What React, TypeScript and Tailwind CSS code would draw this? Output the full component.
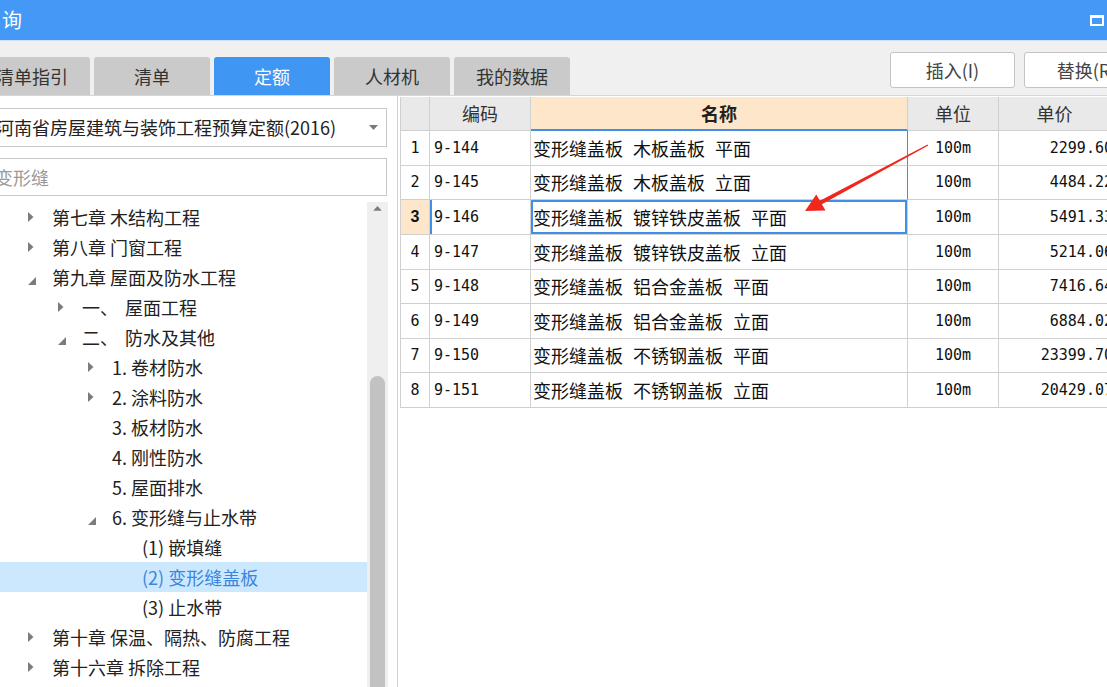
import React from 'react'

type Node = { level: number; arrow?: 'c' | 'e'; text: string; selected?: boolean }

const tree: Node[] = [
  { level: 0, arrow: 'c', text: '第七章 木结构工程' },
  { level: 0, arrow: 'c', text: '第八章 门窗工程' },
  { level: 0, arrow: 'e', text: '第九章 屋面及防水工程' },
  { level: 1, arrow: 'c', text: '一、 屋面工程' },
  { level: 1, arrow: 'e', text: '二、 防水及其他' },
  { level: 2, arrow: 'c', text: '1. 卷材防水' },
  { level: 2, arrow: 'c', text: '2. 涂料防水' },
  { level: 2, text: '3. 板材防水' },
  { level: 2, text: '4. 刚性防水' },
  { level: 2, text: '5. 屋面排水' },
  { level: 2, arrow: 'e', text: '6. 变形缝与止水带' },
  { level: 3, text: '(1) 嵌填缝' },
  { level: 3, text: '(2) 变形缝盖板', selected: true },
  { level: 3, text: '(3) 止水带' },
  { level: 0, arrow: 'c', text: '第十章 保温、隔热、防腐工程' },
  { level: 0, arrow: 'c', text: '第十六章 拆除工程' },
]

const indent = ['pl-[28px]', 'pl-[58px] [word-spacing:3px]', 'pl-[88px]', 'pl-[118px]']

const rows = [
  { code: '9-144', name: '变形缝盖板 木板盖板 平面', price: '2299.60', h: 'h-[35px]' },
  { code: '9-145', name: '变形缝盖板 木板盖板 立面', price: '4484.22', h: 'h-[34px]' },
  { code: '9-146', name: '变形缝盖板 镀锌铁皮盖板 平面', price: '5491.33', h: 'h-[35px]' },
  { code: '9-147', name: '变形缝盖板 镀锌铁皮盖板 立面', price: '5214.06', h: 'h-[35px]' },
  { code: '9-148', name: '变形缝盖板 铝合金盖板 平面', price: '7416.64', h: 'h-[34px]' },
  { code: '9-149', name: '变形缝盖板 铝合金盖板 立面', price: '6884.02', h: 'h-[35px]' },
  { code: '9-150', name: '变形缝盖板 不锈钢盖板 平面', price: '23399.70', h: 'h-[34px]' },
  { code: '9-151', name: '变形缝盖板 不锈钢盖板 立面', price: '20429.07', h: 'h-[35px]' },
]

const mono = "font-['DejaVu_Sans_Mono',monospace] text-[15px]"

function Arrow({ kind }: { kind?: 'c' | 'e' }) {
  if (kind === 'c')
    return (
      <svg width="6" height="10" viewBox="0 0 6 10">
        <path d="M0 0L5.5 5L0 10Z" fill="#7c7c7c" />
      </svg>
    )
  if (kind === 'e')
    return (
      <svg width="8" height="8" viewBox="0 0 8 8" className="mt-[7px]">
        <path d="M8 0V8H0Z" fill="#7c7c7c" />
      </svg>
    )
  return null
}

const tabs = ['清单指引', '清单', '定额', '人材机', '我的数据']

export default function App() {
  return (
    <div className="relative h-[687px] w-[1107px] overflow-hidden bg-[#f0f0f0] font-['Noto_Sans_CJK_SC',sans-serif] text-[#333]">
      {/* title bar */}
      <div className="flex h-[40px] items-center justify-between bg-[#4498f6] pl-[2px] pr-[3px] text-white">
        <span className="text-[20px]">询</span>
        <div className="h-[11px] w-[14px] border-2 border-t-[3px] border-white" />
      </div>
      <div className="h-px bg-[#cfe2f8]" />

      {/* tabs row */}
      <div className="flex h-[55px] items-start justify-between border-b border-[#d6d6d6]">
        <div className="-ml-[26px] mt-[16px] flex shrink-0 gap-[4px]">
          {tabs.map((t) => (
            <div
              key={t}
              className={
                t === '定额'
                  ? 'flex h-[38px] w-[116px] items-center justify-center rounded-t-[3px] bg-[#4096f3] text-[18px] text-white'
                  : 'flex h-[38px] w-[116px] items-center justify-center rounded-t-[3px] bg-[#cacaca] text-[18px] text-[#333]'
              }
            >
              {t}
            </div>
          ))}
        </div>
        <div className="-mr-[42px] mt-[11px] flex shrink-0 gap-[9px]">
          <button className="flex h-[36px] w-[125px] items-center justify-center rounded-[3px] border border-[#c4c4c4] bg-white text-[18px] text-[#444]">
            插入(I)
          </button>
          <button className="flex h-[36px] w-[125px] items-center justify-center rounded-[3px] border border-[#c4c4c4] bg-white text-[18px] text-[#444]">
            替换(R)
          </button>
        </div>
      </div>

      {/* main */}
      <div className="flex h-[591px]">
        {/* left panel */}
        <div className="flex w-[397px] shrink-0 flex-col bg-white">
          <div className="-ml-[12px] mt-[12px] flex h-[39px] w-[399px] items-center justify-between border border-[#c8c8c8] pl-[7px] pr-[8px]">
            <span className="text-[18px] text-[#222]">河南省房屋建筑与装饰工程预算定额(2016)</span>
            <svg width="9" height="5" viewBox="0 0 9 5">
              <path d="M0 0H9L4.5 5Z" fill="#7a7a7a" />
            </svg>
          </div>
          <div className="-ml-[12px] mt-[11px] flex h-[38px] w-[399px] items-center border border-[#c8c8c8] pl-[6px]">
            <span className="text-[18px] text-[#9a9a9a]">变形缝</span>
          </div>
          <div className="mt-[6px] flex flex-1 overflow-hidden">
            <div className="w-[367px]">
              {tree.map((n, i) => (
                <div
                  key={i}
                  className={
                    (n.selected ? 'bg-[#cce8ff] text-[#3a86de] ' : 'text-[#222] ') +
                    'flex h-[30px] items-center whitespace-pre text-[18px] ' +
                    indent[n.level]
                  }
                >
                  <div className="flex w-[24px] items-center">
                    <Arrow kind={n.arrow} />
                  </div>
                  <span>{n.text}</span>
                </div>
              ))}
            </div>
            <div className="flex w-[21px] flex-col items-center bg-[#efefef]">
              <svg width="11" height="6" viewBox="0 0 11 6" className="mt-[4px]">
                <path d="M0 6L5.5 0L11 6Z" fill="#7c7c7c" />
              </svg>
              <div className="mt-[165px] h-[400px] w-[15px] rounded-t-full bg-[#c2c2c2]" />
            </div>
          </div>
        </div>
        <div className="w-px shrink-0 bg-[#d2d2d2]" />

        {/* table area */}
        <div className="min-w-0 flex-1 bg-white pl-[2px] pt-px">
          <div className="w-[720px] border-l border-[#d0d0d0]">
            <div className="flex h-[34px] text-[18px]">
              <div className="w-[29px] shrink-0 border-b border-r border-[#d0d0d0] bg-[#e9e9e9]" />
              <div className="flex w-[101px] shrink-0 items-center justify-center border-b border-r border-[#d0d0d0] bg-[#e9e9e9]">
                编码
              </div>
              <div className="flex w-[377px] shrink-0 items-center justify-center border-b-2 border-r border-b-[#3f8ee8] border-r-[#d0d0d0] bg-[#fde6c9] font-bold text-[#222]">
                名称
              </div>
              <div className="flex w-[91px] shrink-0 items-center justify-center border-b border-r border-[#d0d0d0] bg-[#e9e9e9]">
                单位
              </div>
              <div className="flex w-[120px] shrink-0 items-center justify-center border-b border-r border-[#d0d0d0] bg-[#e9e9e9] pr-[8px]">
                单价
              </div>
            </div>
            {rows.map((r, i) => {
              const cur = i === 2
              return (
                <div key={r.code} className={'flex text-[#111] ' + r.h}>
                  <div
                    className={
                      cur
                        ? "flex w-[29px] shrink-0 items-center justify-center border-b border-r border-[#d0d0d0] bg-[#fde6c9] font-['Liberation_Sans',sans-serif] text-[16px] font-bold"
                        : 'flex w-[29px] shrink-0 items-center justify-center border-b border-r border-[#d0d0d0] ' + mono
                    }
                  >
                    {i + 1}
                  </div>
                  <div
                    className={
                      'flex w-[101px] shrink-0 items-center border-b border-r border-[#d0d0d0] pl-[4px] ' +
                      mono +
                      (cur ? ' shadow-[inset_2px_0_0_#3f8ee8]' : '')
                    }
                  >
                    {r.code}
                  </div>
                  <div
                    className={
                      'flex w-[377px] shrink-0 items-center whitespace-pre border-b border-r pl-[2px] text-[18px] [word-spacing:6px] ' +
                      (cur
                        ? 'border-[#d0d0d0] shadow-[inset_0_0_0_2px_#3f8ee8]'
                        : i < 2
                          ? 'border-b-[#d0d0d0] border-r-[#3f8ee8]'
                          : 'border-[#d0d0d0]')
                    }
                  >
                    {r.name}
                  </div>
                  <div className={'flex w-[91px] shrink-0 items-center justify-center border-b border-r border-[#d0d0d0] ' + mono}>
                    100m
                  </div>
                  <div className={'flex w-[120px] shrink-0 items-center justify-end border-b border-r border-[#d0d0d0] pr-[5px] ' + mono}>
                    {r.price}
                  </div>
                </div>
              )
            })}
          </div>
        </div>
      </div>

      {/* red annotation arrow */}
      <svg className="pointer-events-none absolute left-0 top-0" width="1107" height="687">
        <polygon
          points="805,211 825.5,210.5 821.9,204.3 928.3,145.6 927.6,144.4 819.9,200.7 816.3,194.4"
          fill="#f2261b"
        />
      </svg>
    </div>
  )
}
